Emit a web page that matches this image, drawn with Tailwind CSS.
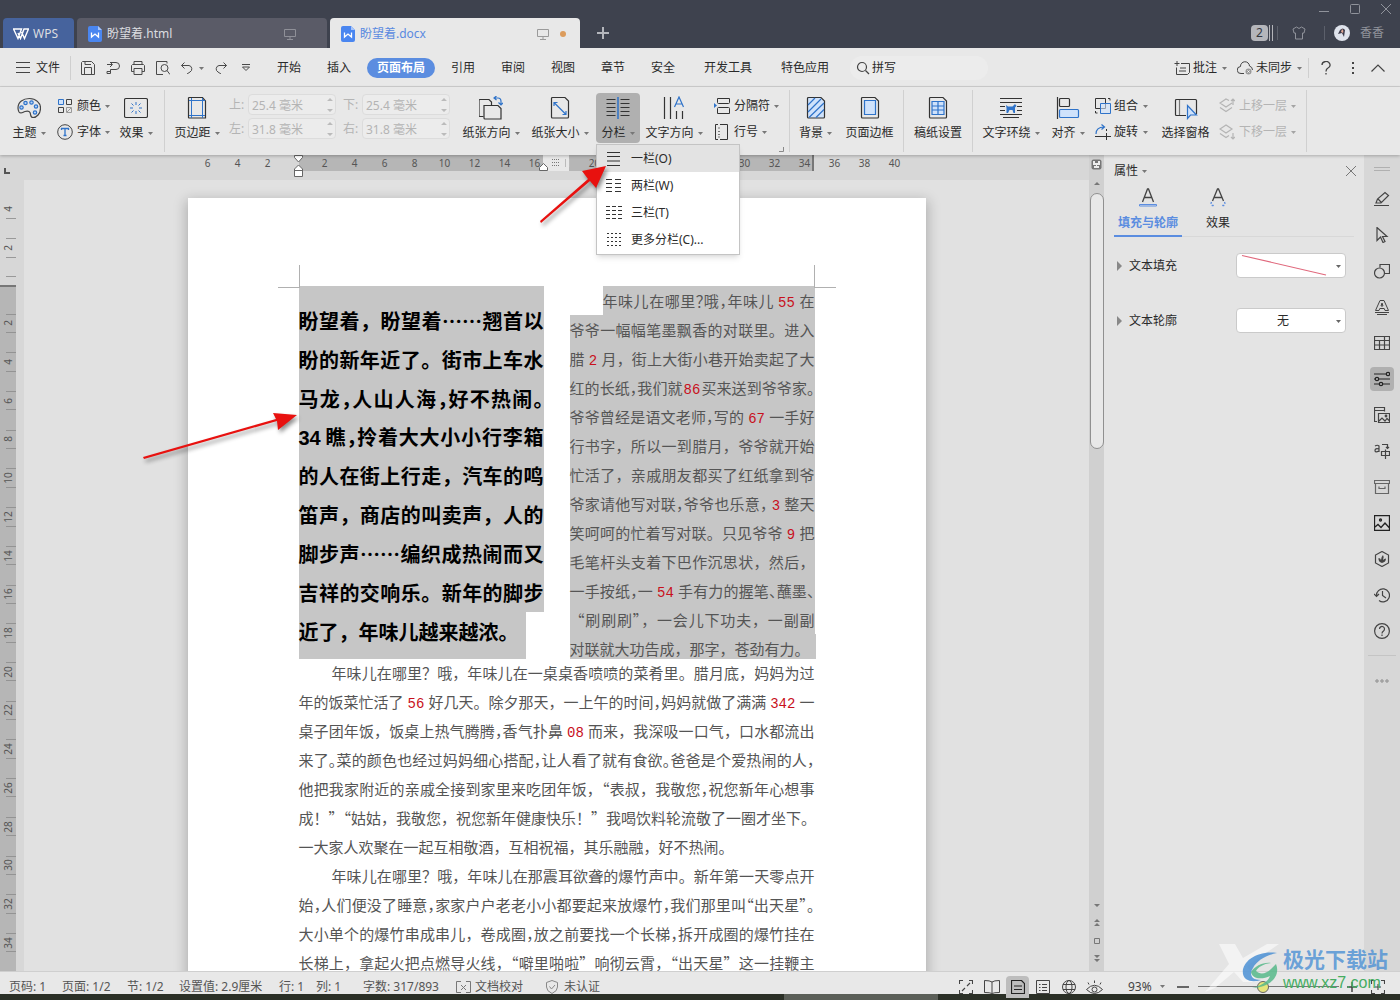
<!DOCTYPE html>
<html lang="zh-CN">
<head>
<meta charset="utf-8">
<title>盼望着.docx - WPS</title>
<script src="https://cdn.jsdelivr.net/npm/@tailwindcss/browser@4"></script>
</head>
<body class="relative flex h-screen flex-col overflow-hidden bg-[#e8e8e8] font-['Noto_Sans','Noto_Sans_CJK_SC',sans-serif] text-xs leading-4 text-[#2a2a2a]">
<svg class="hidden">
  <symbol id="caret" viewBox="0 0 5 3"><path d="M0 0h5L2.500 3z" fill="#777"/></symbol>
  <symbol id="wdoc" viewBox="0 0 14 16"><path d="M2 0h8l4 4v10a2 2 0 0 1-2 2H2a2 2 0 0 1-2-2V2a2 2 0 0 1 2-2z" fill="#4a86f0"/><path d="M10 0l4 4h-4z" fill="#a9c6fa"/><path d="M3.500 6.500v4.500L7 8l3.500 3V6.500" fill="none" stroke="#fff" stroke-width="1.300"/></symbol>
  <symbol id="monitor" viewBox="0 0 12 12"><path d="M.5 1.500h11v7H.5zM6 8.500v3M3 11.500h6" fill="none" stroke="currentColor"/></symbol>
</svg>

<!-- Title bar with document tabs -->
<header class="flex h-12 shrink-0 items-end justify-between bg-[#3e424e]">
  <div class="flex items-end gap-[3px] pl-[3px] text-[#dcdde0]">
    <button class="flex h-[30px] w-[71px] items-center gap-1 rounded-t bg-[#46639d] pt-0.5 pl-2.5">
      <svg class="h-3 w-4" viewBox="0 0 16 12" fill="none" stroke="#fff" stroke-width="1.400"><path d="M.5 1h8L5 10.500zM5 5l2.500 5.500L11 1h4.500L11.500 10.500 8.500 4"/></svg>WPS</button>
    <button class="flex h-[30px] w-[250px] items-center gap-[5px] rounded-t bg-[#5a5b67] pt-0.5 pr-[31px] pl-[11px]">
      <svg class="h-4 w-3.5"><use href="#wdoc"/></svg><span>盼望着.html</span>
      <svg class="ml-auto h-3 w-3 text-[#8f9098]"><use href="#monitor"/></svg></button>
    <button class="flex h-[30px] w-[250px] items-center gap-[5px] rounded-t bg-[#e8e8e8] pt-0.5 pr-2 pl-[11px] text-[#5a8ae0]">
      <svg class="h-4 w-3.5"><use href="#wdoc"/></svg><span>盼望着.docx</span>
      <svg class="ml-auto h-3 w-3 text-[#9a9a9a]"><use href="#monitor"/></svg>
      <i class="mx-1.5 size-1.5 rounded-full bg-[#dc9c5c]"></i></button>
    <button aria-label="新建" class="ml-3.5 flex h-[30px] items-center"><svg class="size-3" viewBox="0 0 12 12" stroke="#b4b6bc" stroke-width="2"><path d="M6 0v12M0 6h12"/></svg></button>
  </div>
  <div class="flex flex-col items-end self-stretch text-[#90939b]">
    <div class="flex gap-[21px] pt-1 pr-[9px]">
      <svg class="size-2.5" viewBox="0 0 10 10" stroke="currentColor"><path d="M0 7.500h10"/></svg>
      <svg class="size-2.5" viewBox="0 0 10 10" stroke="currentColor" fill="none"><rect x=".5" y=".5" width="9" height="9" rx="1"/></svg>
      <svg class="size-2.5" viewBox="0 0 10 10" stroke="currentColor"><path d="M0 0l10 10M10 0L0 10"/></svg>
    </div>
    <div class="mt-[11px] flex items-center pr-4">
      <span class="flex h-4 w-[17px] items-center justify-center rounded-sm bg-[#b4b5ba] text-[#33363f]">2</span>
      <i class="ml-px h-4 w-1 border-x border-[#b4b5ba]"></i>
      <i class="ml-1 h-3.5 w-px bg-[#5c606b]"></i>
      <svg class="ml-3.5 h-3.5 w-3.5" viewBox="0 0 14 14" stroke="currentColor" fill="none"><path d="M4.500 1L1 3l1 4h1.500v6h7V7H12l1-4-3.500-2Q7 4 4.500 1z"/></svg>
      <i class="ml-[18px] h-3.5 w-px bg-[#5c606b]"></i>
      <svg class="ml-[9px] size-4" viewBox="0 0 16 16"><circle cx="8" cy="8" r="8" fill="#dfe3ec"/><path d="M6 5q3-3 5 0l-1 7-2-4-4 1z" fill="#3b3a4a"/><path d="M8 4q2 1 1 4l-2-1z" fill="#e2a795"/></svg>
      <span class="ml-2.5">香香</span>
    </div>
  </div>
</header>

<!-- Menu bar -->
<nav class="flex h-[39px] shrink-0 items-center border-b border-[#d0d0d0] pt-0.5">
  <button class="flex items-center gap-1.5 pl-4"><svg class="h-3 w-3.5" viewBox="0 0 14 12" stroke="#444"><path d="M0 .5h14M0 5.500h14M0 10.500h14"/></svg>文件</button>
  <i class="ml-2.5 h-6 w-px bg-[#cfcfcf]"></i>
  <div class="flex w-[193px] items-center gap-[11px] pl-2.5 text-[#4a4a4a]">
    <svg class="size-3.5 shrink-0" viewBox="0 0 14 14" fill="none" stroke="currentColor"><path d="M1.500.5h9l3 3v10h-13v-12zM3.500 13V6.500h7V13M4 .5v3h6"/></svg>
    <svg class="size-3.5 shrink-0" viewBox="0 0 14 14" fill="none" stroke="currentColor"><path d="M1 3.500h5M4 1l2.500 2.500L4 6M5 1.500h5a3.500 3.500 0 0 1 0 7H4.500v4H1v-2h3.500"/></svg>
    <svg class="size-3.5 shrink-0" viewBox="0 0 14 14" fill="none" stroke="currentColor"><path d="M3 3.500v-3h8v3M3 10.500H.5v-6l1-1h11l1 1v6H11M3 7.500h8v6H3z"/></svg>
    <svg class="size-3.5 shrink-0" viewBox="0 0 14 14" fill="none" stroke="currentColor"><path d="M11 2.500v-2H.5v13H7"/><circle cx="8.500" cy="7" r="3.500"/><path d="M11 9.500l3 4"/></svg>
    <span class="flex items-center gap-1.5"><svg class="size-3" viewBox="0 0 12 12" fill="none" stroke="currentColor"><path d="M3.500.5L.5 3.500l3 3M.5 3.500H8a3.500 3.500 0 0 1 1 6.500L6 12"/></svg><svg class="h-[3px] w-[5px]"><use href="#caret"/></svg></span>
    <svg class="size-3 shrink-0" viewBox="0 0 12 12" fill="none" stroke="currentColor"><path d="M8.500.5l3 3-3 3M11.500 3.500H4A3.500 3.500 0 0 0 3 10l3 2"/></svg>
    <svg class="ml-1 h-2 w-2 shrink-0" viewBox="0 0 8 8" fill="none" stroke="currentColor"><path d="M0 .5h8M.5 3L4 6.500 7.500 3z"/></svg>
  </div>
  <div class="flex text-center">
    <button class="w-[50px]">开始</button><button class="w-[50px]">插入</button>
    <button class="mx-[3px] h-5 w-[68px] rounded-full bg-[#5b8de0] font-bold text-white">页面布局</button>
    <button class="w-[50px]">引用</button><button class="w-[50px]">审阅</button><button class="w-[50px]">视图</button><button class="w-[50px]">章节</button><button class="w-[50px]">安全</button><button class="w-20">开发工具</button><button class="w-[74px]">特色应用</button>
  </div>
  <label class="ml-2 flex h-6 w-[138px] items-center gap-0.5 rounded-full bg-[#ececec] pl-1.5">
    <svg class="size-3.5 shrink-0" viewBox="0 0 14 14" fill="none" stroke="#444" stroke-width="1.200"><circle cx="6" cy="6" r="4.500"/><path d="M9.500 9.500L13 13"/></svg>
    <input aria-label="搜索" value="拼写" class="w-24 bg-transparent outline-none"></label>
  <div class="ml-auto flex items-center pr-[15px]">
    <button class="flex items-center gap-[3px]"><svg class="h-3.5 w-4" viewBox="0 0 16 14" fill="none" stroke="#444"><path d="M7 2.500h8.500v9l-2 2h-11v-7M3 0v5M.5 2.500h5M6 7h6M5 10h7"/></svg>批注<svg class="ml-0.5 h-[3px] w-[5px]"><use href="#caret"/></svg></button>
    <button class="ml-2.5 flex items-center gap-[3px]"><svg class="h-3.5 w-4" viewBox="0 0 16 14" fill="none" stroke="#444"><path d="M7 12.500H4A3.500 3.500 0 0 1 3.500 5.500a4.500 4.500 0 0 1 9-.5q3 1 3 4"/><circle cx="11.500" cy="10.500" r="3" fill="#999" stroke="none"/><path d="M10.500 9.500l2 2m0-2l-2 2" stroke="#fff"/></svg>未同步<svg class="ml-0.5 h-[3px] w-[5px]"><use href="#caret"/></svg></button>
    <i class="ml-1.5 h-5 w-px bg-[#cfcfcf]"></i>
    <svg class="ml-3 h-3.5 w-2.5" viewBox="0 0 10 14" fill="none" stroke="#444" stroke-width="1.300"><path d="M1 4a4 3.500 0 1 1 6 3Q5 8 5 10.500M5 12v1.500"/></svg>
    <svg class="ml-5 h-3.5 w-1" viewBox="0 0 4 14" fill="#444"><rect x="1" y="1" width="2" height="2"/><rect x="1" y="6" width="2" height="2"/><rect x="1" y="11" width="2" height="2"/></svg>
    <svg class="ml-4 h-2 w-3.5" viewBox="0 0 14 8" fill="none" stroke="#444" stroke-width="1.200"><path d="M.5 7.500L7 1l6.500 6.500"/></svg>
  </div>
</nav>

<!-- Ribbon -->
<section class="relative z-20 flex h-[68px] shrink-0 pl-1 shadow-[0_1px_3px_rgba(0,0,0,0.25)]">
  <button class="flex w-[50px] shrink-0 flex-col items-center pt-[9px]">
    <svg class="size-6" viewBox="0 0 24 24" fill="none" stroke="#444" stroke-width="1.200"><path d="M1 12C1 6 6 2.500 12.500 2.500S23.500 7 23.500 12c0 6-4 9.500-7.500 9.500-3 0-2-3-3-5s-3-1.500-5-1-4 3-6 .5Q1 14 1 12z"/><g stroke="#2f73c9" fill="#b7d3f7"><circle cx="4.500" cy="11.500" r="1.700"/><circle cx="8.500" cy="7" r="1.700"/><circle cx="14.500" cy="6.500" r="1.700"/><circle cx="19" cy="10.500" r="1.700"/><circle cx="18" cy="16.500" r="1.700"/></g></svg>
    <span class="mt-[5px] flex items-center gap-1">主题<svg class="h-[3px] w-[5px]"><use href="#caret"/></svg></span></button>
  <div class="flex w-[59px] shrink-0 flex-col gap-2.5 pt-[11px] pl-[3px]">
    <button class="flex items-center gap-1"><svg class="size-4" viewBox="0 0 16 16" fill="none" stroke="#444"><path d="M1.500 1.500h5v5h-5z" stroke="#2f73c9" fill="#cfe2fb"/><path d="M9.500 1.500h5v5h-5zM1.500 9.500h5v5h-5z"/><path d="M9.500 9.500h5v5h-5zM10 14l4-4" stroke="#999"/></svg>颜色<svg class="h-[3px] w-[5px]"><use href="#caret"/></svg></button>
    <button class="flex items-center gap-1"><svg class="size-4" viewBox="0 0 16 16" fill="none" stroke="#444"><circle cx="8" cy="8" r="7.300"/><path d="M4.500 6V4.500h7V6M8 4.500v7M6.500 11.500h3" stroke="#2f73c9" stroke-width="1.300"/></svg>字体<svg class="h-[3px] w-[5px]"><use href="#caret"/></svg></button>
  </div>
  <button class="flex w-[46px] shrink-0 flex-col items-center pt-[9px]">
    <svg class="size-6" viewBox="0 0 24 24" fill="none" stroke="#333"><rect x=".5" y="2.500" width="23" height="19" rx="1.500" stroke-width="1.200"/><path d="M12 6v3M12 15v3M6 12h3M15 12h3M7.500 7.500l2 2M14.500 14.500l2 2M7.500 16.500l2-2M14.500 9.500l2-2" stroke="#2f73c9"/></svg>
    <span class="mt-[5px] flex items-center gap-1">效果<svg class="h-[3px] w-[5px]"><use href="#caret"/></svg></span></button>
  <i class="mt-[3px] ml-[5px] h-[62px] w-px shrink-0 bg-[#d0d0d0]"></i>
  <button class="flex w-16 shrink-0 flex-col items-center pt-[9px]">
    <svg class="size-6" viewBox="0 0 24 24" fill="none" stroke="#333" stroke-width="1.200"><path d="M4 1.500h13.500L20.500 5v17H4a.5.5 0 0 1-.5-.5V2z"/><path d="M6.500 2v20M17.500 2v20M4 4.500h16M4 19.500h16" stroke="#2f73c9" stroke-width="1"/></svg>
    <span class="mt-[5px] flex items-center gap-1">页边距<svg class="h-[3px] w-[5px]"><use href="#caret"/></svg></span></button>
  <div class="grid w-[228px] shrink-0 auto-rows-min grid-cols-[107px_107px] gap-x-[7px] gap-y-[3px] pt-[7px] text-[#b4b4b4]">
    <label class="flex items-center justify-between">上:<span class="relative"><input value="25.4 毫米" disabled class="block h-[21px] w-[88px] rounded-sm border border-[#dcdcdc] bg-[#ececec] pl-[3px]"><svg class="absolute top-1 right-[3px] h-3.5 w-1.5" viewBox="0 0 6 14" fill="#bbb"><path d="M0 3l3-3 3 3zM0 11l3 3 3-3z"/></svg></span></label>
    <label class="flex items-center justify-between">下:<span class="relative"><input value="25.4 毫米" disabled class="block h-[21px] w-[88px] rounded-sm border border-[#dcdcdc] bg-[#ececec] pl-[3px]"><svg class="absolute top-1 right-[3px] h-3.5 w-1.5" viewBox="0 0 6 14" fill="#bbb"><path d="M0 3l3-3 3 3zM0 11l3 3 3-3z"/></svg></span></label>
    <label class="flex items-center justify-between">左:<span class="relative"><input value="31.8 毫米" disabled class="block h-[21px] w-[88px] rounded-sm border border-[#dcdcdc] bg-[#ececec] pl-[3px]"><svg class="absolute top-1 right-[3px] h-3.5 w-1.5" viewBox="0 0 6 14" fill="#bbb"><path d="M0 3l3-3 3 3zM0 11l3 3 3-3z"/></svg></span></label>
    <label class="flex items-center justify-between">右:<span class="relative"><input value="31.8 毫米" disabled class="block h-[21px] w-[88px] rounded-sm border border-[#dcdcdc] bg-[#ececec] pl-[3px]"><svg class="absolute top-1 right-[3px] h-3.5 w-1.5" viewBox="0 0 6 14" fill="#bbb"><path d="M0 3l3-3 3 3zM0 11l3 3 3-3z"/></svg></span></label>
  </div>
  <button class="flex w-[68px] shrink-0 flex-col items-center pt-[9px]">
    <svg class="size-6" viewBox="0 0 24 24" fill="none" stroke="#333" stroke-width="1.200"><path d="M4.500 20.500H1a1 1 0 0 1-1-1V4.500a1 1 0 0 1 1-1h9l2.500 2.500v3"/><path d="M5 9.500h14l3 3v10.500H6a1 1 0 0 1-1-1z"/><path d="M15.500 2H19q3 0 3 3.500v3M17.500 0l-2.500 2 2.500 2M19.500 6.500l2.500 2.500 2.500-2.500" stroke="#2f73c9"/></svg>
    <span class="mt-[5px] flex items-center gap-1">纸张方向<svg class="h-[3px] w-[5px]"><use href="#caret"/></svg></span></button>
  <button class="flex w-[70px] shrink-0 flex-col items-center pt-[9px]">
    <svg class="size-6" viewBox="0 0 24 24" fill="none" stroke="#333" stroke-width="1.200"><path d="M4.500 1.500H17L20.500 5v16a1 1 0 0 1-1 1h-15a1 1 0 0 1-1-1v-18.500a1 1 0 0 1 1-1z"/><path d="M6 6.500l12 12M6 10V6.500h3.500M18 15v3.500h-3.500" stroke="#2f73c9"/></svg>
    <span class="mt-[5px] flex items-center gap-1">纸张大小<svg class="h-[3px] w-[5px]"><use href="#caret"/></svg></span></button>
  <div class="relative mx-px w-11 shrink-0">
    <button aria-expanded="true" class="mt-1.5 flex h-[50px] w-11 flex-col items-center rounded bg-[#b0b0b0] pt-[3px]">
      <svg class="size-6" viewBox="0 0 24 24" fill="none" stroke="#333"><path d="M.5 3.500h9M.5 7.500h9M.5 11.500h9M.5 15.500h9M.5 19.500h9M14.500 3.500h9M14.500 7.500h9M14.500 11.500h9M14.500 15.500h9M14.500 19.500h9" stroke-width="1.200"/><path d="M12 1v22" stroke="#2f73c9" stroke-width="1.500"/></svg>
      <span class="mt-[5px] flex items-center gap-1">分栏<svg class="h-[3px] w-[5px]"><use href="#caret"/></svg></span></button>
    <div role="menu" class="absolute top-[57px] left-0 z-30 w-36 border border-[#c4c4c4] bg-white pb-px shadow-md">
      <button role="menuitem" class="flex h-[27px] w-full items-center gap-[9px] bg-[#e3e3e3] pt-px pl-[9px]"><svg class="h-3.5 w-4" viewBox="0 0 16 14" stroke="#333" stroke-width="1.200"><path d="M1 .5h13M1 4.500h13M1 9h13M1 13.500h13"/></svg>一栏(O)</button>
      <button role="menuitem" class="flex h-[27px] w-full items-center gap-[9px] pt-px pl-[9px]"><svg class="h-3.5 w-4" viewBox="0 0 16 14" stroke="#333" stroke-dasharray="6 3"><path d="M0 .5h15M0 4.500h15M0 8.500h15M0 12.500h15"/></svg>两栏(W)</button>
      <button role="menuitem" class="flex h-[27px] w-full items-center gap-[9px] pt-px pl-[9px]"><svg class="h-3.5 w-4" viewBox="0 0 16 14" stroke="#333" stroke-dasharray="4 2"><path d="M0 .5h16M0 4.500h16M0 8.500h16M0 12.500h16"/></svg>三栏(T)</button>
      <button role="menuitem" class="flex h-[27px] w-full items-center gap-[9px] pt-px pl-[9px]"><svg class="h-3.5 w-4" viewBox="0 0 16 14" stroke="#333" stroke-dasharray="2 2"><path d="M1 .5h15M1 4.500h15M1 8.500h15M1 12.500h15"/></svg>更多分栏(C)...</button>
    </div>
  </div>
  <button class="flex w-[66px] shrink-0 flex-col items-center pt-[9px]">
    <svg class="size-6" viewBox="0 0 24 24" fill="none" stroke="#333" stroke-width="1.200"><path d="M2.500 1v22M8.500 1v22M14.500 15v8M20.500 15v8"/><path d="M12.500 11L17 1l4.500 10M14 8h6" stroke="#2f73c9"/></svg>
    <span class="mt-[5px] flex items-center gap-1">文字方向<svg class="h-[3px] w-[5px]"><use href="#caret"/></svg></span></button>
  <div class="relative flex w-[82px] shrink-0 flex-col gap-2.5 pt-[11px] pl-[7px]">
    <button class="flex items-center gap-1"><svg class="size-4" viewBox="0 0 16 16" fill="none" stroke="#333"><path d="M3.500.5v4a1 1 0 0 0 1 1h10a1 1 0 0 0 1-1v-4zM3.500 15.500v-5a1 1 0 0 1 1-1h10a1 1 0 0 1 1 1v5z"/><path d="M0 5l3 2.500L0 10z" fill="#2f73c9" stroke="none"/></svg>分隔符<svg class="h-[3px] w-[5px]"><use href="#caret"/></svg></button>
    <button class="flex items-center gap-1"><svg class="size-4" viewBox="0 0 16 16" fill="none" stroke="#333"><path d="M6 .5h7.500v15H6M4 .5H1.500v15H4"/><path d="M5 3v2M4 7.500h2M4 10.500h2M5 12v2" stroke="#777"/></svg>行号<svg class="h-[3px] w-[5px]"><use href="#caret"/></svg></button>
    <svg class="absolute right-[5px] bottom-[3px] size-1.5" viewBox="0 0 6 6" fill="none" stroke="#888"><path d="M5.500 1v4.500H1"/></svg>
  </div>
  <i class="mt-[3px] h-[62px] w-px shrink-0 bg-[#d0d0d0]"></i>
  <button class="flex w-[51px] shrink-0 flex-col items-center pt-[9px]">
    <svg class="size-6" viewBox="0 0 24 24" fill="none" stroke="#333" stroke-width="1.200"><path d="M4.500 1.500H17L20.500 5v16a1 1 0 0 1-1 1h-15a1 1 0 0 1-1-1v-18.500a1 1 0 0 1 1-1z" fill="#cfe2fb"/><path d="M4 9l7-7M4 16L17 3M5 21.500L20 7M12 21.500l8-8" stroke="#2f73c9"/></svg>
    <span class="mt-[5px] flex items-center gap-1">背景<svg class="h-[3px] w-[5px]"><use href="#caret"/></svg></span></button>
  <button class="flex w-[57px] shrink-0 flex-col items-center pt-[9px]">
    <svg class="size-6" viewBox="0 0 24 24" fill="none" stroke="#333" stroke-width="1.200"><path d="M4.500 1.500H17L20.500 5v16a1 1 0 0 1-1 1h-15a1 1 0 0 1-1-1v-18.500a1 1 0 0 1 1-1z"/><path d="M6.500 4.500h11v14h-11z" stroke="#2f73c9" fill="#cfe2fb"/></svg>
    <span class="mt-[5px]">页面边框</span></button>
  <i class="mt-[3px] ml-[5px] h-[62px] w-px shrink-0 bg-[#d0d0d0]"></i>
  <button class="flex w-[68px] shrink-0 flex-col items-center pt-[9px]">
    <svg class="size-6" viewBox="0 0 24 24" fill="none" stroke="#333" stroke-width="1.200"><path d="M4.500 1.500H17L20.500 5v16a1 1 0 0 1-1 1h-15a1 1 0 0 1-1-1v-18.500a1 1 0 0 1 1-1z"/><path d="M6 5.500h12v13H6zM6 10h12M6 14h12M12 5.500v13" stroke="#2f73c9" fill="#cfe2fb"/></svg>
    <span class="mt-[5px]">稿纸设置</span></button>
  <i class="mt-[3px] h-[62px] w-px shrink-0 bg-[#d0d0d0]"></i>
  <button class="flex w-[76px] shrink-0 flex-col items-center pt-[9px]">
    <svg class="size-6" viewBox="0 0 24 24" fill="none" stroke="#333" stroke-width="1.200"><path d="M1 2.500h22M1 6.500h22M1 10.500h5M1 14.500h5M18 10.500h5M18 14.500h5M1 18.500h22M4 21.500h16"/><path d="M7 9l2 1.500h4.500L16 8l1.500 2-1.500 1.500V17h-1.500l-1-3h-3L9 17H7.500V12z" fill="#2f73c9" stroke="none"/></svg>
    <span class="mt-[5px] flex items-center gap-1">文字环绕<svg class="h-[3px] w-[5px]"><use href="#caret"/></svg></span></button>
  <button class="flex w-[38px] shrink-0 flex-col items-center pt-[9px]">
    <svg class="size-6" viewBox="0 0 24 24" fill="none" stroke="#333" stroke-width="1.200"><path d="M1.500 1v22"/><rect x="3.500" y="2.500" width="10" height="8" rx="1"/><rect x="3.500" y="13.500" width="19" height="8" rx="1" stroke="#2f73c9" fill="#cfe2fb"/></svg>
    <span class="mt-[5px] flex items-center gap-1">对齐<svg class="h-[3px] w-[5px]"><use href="#caret"/></svg></span></button>
  <div class="flex w-[70px] shrink-0 flex-col gap-2.5 pt-[11px] pl-2">
    <button class="flex items-center gap-[3px]"><svg class="size-4" viewBox="0 0 16 16" fill="none" stroke="#333"><path d="M.5.5h10v10H.5z"/><path d="M5.500 5.500h10v10h-10z" stroke="#2f73c9" fill="#cfe2fb" fill-opacity=".6"/><path d="M.5 13v2h2M13 .5h2v2"/></svg>组合<svg class="ml-0.5 h-[3px] w-[5px]"><use href="#caret"/></svg></button>
    <button class="flex items-center gap-[3px]"><svg class="size-4" viewBox="0 0 16 16" fill="none" stroke="#333"><path d="M1 10Q1 3 9 3M6.500.5L9.500 3l-3 2.500" stroke="#2f73c9" stroke-width="1.200"/><path d="M0 12.500h16M11.500 16V9M11.500 5v2"/></svg>旋转<svg class="ml-0.5 h-[3px] w-[5px]"><use href="#caret"/></svg></button>
  </div>
  <button class="flex w-[57px] shrink-0 flex-col items-center pt-[9px]">
    <svg class="size-6" viewBox="0 0 24 24" fill="none" stroke="#333" stroke-width="1.200"><path d="M12 19.500H2.500a1 1 0 0 1-1-1v-14a1 1 0 0 1 1-1h19a1 1 0 0 1 1 1V18"/><path d="M5.500 4v15" stroke="#777"/><path d="M13.500 9.500v13l3-3.500h6z" stroke="#2f73c9" fill="#cfe2fb"/></svg>
    <span class="mt-[5px]">选择窗格</span></button>
  <div class="flex w-[92px] shrink-0 flex-col gap-2.5 pt-[11px] pl-[5px] text-[#b4b4b4]">
    <button disabled class="flex items-center gap-1"><svg class="size-4" viewBox="0 0 16 16" fill="none" stroke="currentColor" stroke-width="1.200"><path d="M10 2.500L7 1 1 5l6 4 6-4M1 9.500l6 4 6-4M14 7V1M12 3l2-2 2 2"/></svg>上移一层<svg class="h-[3px] w-[5px] opacity-60"><use href="#caret"/></svg></button>
    <button disabled class="flex items-center gap-1"><svg class="size-4" viewBox="0 0 16 16" fill="none" stroke="currentColor" stroke-width="1.200"><path d="M7 1L1 5l6 4 6-4zM1 9.500l6 4 3-2M14 9v6M12 13l2 2 2-2"/></svg>下移一层<svg class="h-[3px] w-[5px] opacity-60"><use href="#caret"/></svg></button>
  </div>
  <i class="mt-[3px] h-[62px] w-px shrink-0 bg-[#d0d0d0]"></i>
</section>

<main class="flex min-h-0 flex-1 overflow-hidden bg-[#e1e1e1]">
  <!-- Vertical ruler -->
  <aside class="w-6 shrink-0 bg-[#d7d7d7] text-[10px] leading-3 text-[#555]">
    <div class="h-[132px] w-4 border-b-2 border-[#777]">
      <div class="h-[34px] pt-[13px] pl-1"><svg class="size-1.5" viewBox="0 0 6 6" fill="none" stroke="#555" stroke-width="2"><path d="M1 0v5h5"/></svg></div>
      <div class="relative flex h-[39px] items-center justify-center"><i class="absolute right-0 h-5 w-2.5 border-b border-[#999]"></i><span class="-rotate-90">4</span></div>
      <div class="relative flex h-[39px] items-center justify-center"><i class="absolute right-0 h-5 w-2.5 border-y border-[#999]"></i><span class="-rotate-90">2</span></div>
      <i class="ml-auto block h-2.5 w-2.5 border-b border-[#999]"></i>
    </div>
    <div class="h-full w-4 bg-[#b6b6b6] pt-[17px]">
      <ol class="grid h-[658px] auto-rows-fr">
        <li class="relative flex items-center justify-center"><i class="absolute right-0 h-1/2 w-2.5 border-y border-[#939393]"></i><span class="-rotate-90">2</span></li>
        <li class="relative flex items-center justify-center"><i class="absolute right-0 h-1/2 w-2.5 border-y border-[#939393]"></i><span class="-rotate-90">4</span></li>
        <li class="relative flex items-center justify-center"><i class="absolute right-0 h-1/2 w-2.5 border-y border-[#939393]"></i><span class="-rotate-90">6</span></li>
        <li class="relative flex items-center justify-center"><i class="absolute right-0 h-1/2 w-2.5 border-y border-[#939393]"></i><span class="-rotate-90">8</span></li>
        <li class="relative flex items-center justify-center"><i class="absolute right-0 h-1/2 w-2.5 border-y border-[#939393]"></i><span class="-rotate-90">10</span></li>
        <li class="relative flex items-center justify-center"><i class="absolute right-0 h-1/2 w-2.5 border-y border-[#939393]"></i><span class="-rotate-90">12</span></li>
        <li class="relative flex items-center justify-center"><i class="absolute right-0 h-1/2 w-2.5 border-y border-[#939393]"></i><span class="-rotate-90">14</span></li>
        <li class="relative flex items-center justify-center"><i class="absolute right-0 h-1/2 w-2.5 border-y border-[#939393]"></i><span class="-rotate-90">16</span></li>
        <li class="relative flex items-center justify-center"><i class="absolute right-0 h-1/2 w-2.5 border-y border-[#939393]"></i><span class="-rotate-90">18</span></li>
        <li class="relative flex items-center justify-center"><i class="absolute right-0 h-1/2 w-2.5 border-y border-[#939393]"></i><span class="-rotate-90">20</span></li>
        <li class="relative flex items-center justify-center"><i class="absolute right-0 h-1/2 w-2.5 border-y border-[#939393]"></i><span class="-rotate-90">22</span></li>
        <li class="relative flex items-center justify-center"><i class="absolute right-0 h-1/2 w-2.5 border-y border-[#939393]"></i><span class="-rotate-90">24</span></li>
        <li class="relative flex items-center justify-center"><i class="absolute right-0 h-1/2 w-2.5 border-y border-[#939393]"></i><span class="-rotate-90">26</span></li>
        <li class="relative flex items-center justify-center"><i class="absolute right-0 h-1/2 w-2.5 border-y border-[#939393]"></i><span class="-rotate-90">28</span></li>
        <li class="relative flex items-center justify-center"><i class="absolute right-0 h-1/2 w-2.5 border-y border-[#939393]"></i><span class="-rotate-90">30</span></li>
        <li class="relative flex items-center justify-center"><i class="absolute right-0 h-1/2 w-2.5 border-y border-[#939393]"></i><span class="-rotate-90">32</span></li>
        <li class="relative flex items-center justify-center"><i class="absolute right-0 h-1/2 w-2.5 border-y border-[#939393]"></i><span class="-rotate-90">34</span></li>
      </ol>
    </div>
  </aside>

  <!-- Document workspace -->
  <div class="flex min-w-0 flex-1 flex-col items-center overflow-hidden">
    <div class="flex h-[25px] w-full shrink-0 justify-center bg-[#d7d7d7]">
      <div class="relative flex w-[738px] shrink-0 text-center text-[10px] leading-4 text-[#555]">
        <div class="absolute left-[111px] flex h-4 w-[515px] border-r-2 border-[#777] bg-[#b6b6b6]"><i class="ml-[244px] h-4 w-[26px] bg-[#e8e8e8]"></i></div>
        <div class="relative flex pl-[5px]"><span class="w-[30px]">6</span><span class="w-[30px]">4</span><span class="w-[30px]">2</span></div>
        <div class="relative ml-[27px] flex"><span class="w-[30px]">2</span><span class="w-[30px]">4</span><span class="w-[30px]">6</span><span class="w-[30px]">8</span><span class="w-[30px]">10</span><span class="w-[30px]">12</span><span class="w-[30px]">14</span><span class="w-[30px]">16</span><span class="w-[30px]"></span><span class="w-[30px]">20</span><span class="w-[120px]"></span><span class="w-[30px]">30</span><span class="w-[30px]">32</span><span class="w-[30px]">34</span><span class="w-[30px]">36</span><span class="w-[30px]">38</span><span class="w-[30px]">40</span></div>
        <svg class="absolute top-0 left-[106px] h-[22px] w-[9px]" viewBox="0 0 9 22" fill="#fff" stroke="#666"><path d="M.5.5h8v2L4.500 7l-4-4.500zM4.500 10l4 4v7.500h-8V14zM.5 15.500h8"/></svg>
        <svg class="absolute top-2 left-[351px] h-2 w-[9px]" viewBox="0 0 9 8" fill="#fff" stroke="#666"><path d="M4.500.5l4 4v3h-8v-3z"/></svg>
        <svg class="absolute top-1 left-[364px] h-2 w-[19px]" viewBox="0 0 19 8" stroke="#777" stroke-dasharray="1 1"><path d="M0 .5h8M0 3.500h8M0 6.500h8"/><path d="M13.500 0v8M17.500 0v8" stroke="#bbb" stroke-dasharray="none"/></svg>
      </div>
    </div>
    <article class="relative mt-[18px] flex h-[1100px] w-[738px] shrink-0 flex-col bg-white pt-[88px] pr-[111px] pl-[111px] font-['Noto_Sans_CJK_SC',sans-serif] text-[15px] leading-[29px] whitespace-nowrap text-[#555] shadow-[0_4px_12px_2px_rgba(0,0,0,0.22)]">
      <i class="absolute top-[67px] left-[90px] h-[23px] w-[22px] border-r border-b border-[#b0b0b0]"></i>
      <i class="absolute top-[67px] right-[90px] h-[23px] w-[22px] border-b border-l border-[#b0b0b0]"></i>
      <div class="flex h-[372px] justify-between">
        <section class="w-[245px] text-xl font-bold text-black">
          <div class="grid h-[326px] auto-rows-fr items-center bg-[#c6c6c6] pt-4 [text-align-last:justify]">
            <p>盼望着，盼望着……翘首以</p>
            <p>盼的新年近了。街市上车水</p>
            <p class="[font-feature-settings:'halt']">马龙，人山人海，好不热闹。</p>
            <p class="[font-feature-settings:'halt']"><span class="mr-1 font-['Liberation_Sans']">34</span>瞧，拎着大大小小行李箱</p>
            <p>的人在街上行走，汽车的鸣</p>
            <p>笛声，商店的叫卖声，人的</p>
            <p>脚步声……编织成热闹而又</p>
            <p>吉祥的交响乐。新年的脚步</p>
          </div>
          <p class="h-[47px] w-[227px] bg-[#c6c6c6] leading-[39px]">近了，年味儿越来越浓。</p>
        </section>
        <section class="w-[245px] [text-align-last:justify]">
          <p class="ml-[33px] bg-[#c6c6c6] [font-feature-settings:'halt']">年味儿在哪里？哦，年味儿<span class="mx-1 font-['Liberation_Mono'] text-sm text-[#c8101c]">55</span>在</p>
          <div class="bg-[#c6c6c6]">
            <p>爷爷一幅幅笔墨飘香的对联里。进入</p>
            <p>腊<span class="mx-1 font-['Liberation_Mono'] text-sm text-[#c8101c]">2</span>月，街上大街小巷开始卖起了大</p>
            <p class="[font-feature-settings:'halt']">红的长纸，我们就<span class="mx-px font-['Liberation_Mono'] text-sm text-[#c8101c]">86</span>买来送到爷爷家。</p>
            <p class="[font-feature-settings:'halt']">爷爷曾经是语文老师，写的<span class="mx-1 font-['Liberation_Mono'] text-sm text-[#c8101c]">67</span>一手好</p>
            <p>行书字，所以一到腊月，爷爷就开始</p>
            <p>忙活了，亲戚朋友都买了红纸拿到爷</p>
            <p class="[font-feature-settings:'halt']">爷家请他写对联，爷爷也乐意，<span class="mx-1 font-['Liberation_Mono'] text-sm text-[#c8101c]">3</span>整天</p>
            <p>笑呵呵的忙着写对联。只见爷爷<span class="mx-1 font-['Liberation_Mono'] text-sm text-[#c8101c]">9</span>把</p>
            <p>毛笔杆头支着下巴作沉思状，然后，</p>
            <p class="[font-feature-settings:'halt']">一手按纸，一<span class="mx-1 font-['Liberation_Mono'] text-sm text-[#c8101c]">54</span>手有力的握笔、蘸墨、</p>
            <p>“刷刷刷”，一会儿下功夫，一副副</p>
          </div>
          <p class="h-[25px] w-[246px] bg-[#c6c6c6] [text-align-last:left]">对联就大功告成，那字，苍劲有力。</p>
        </section>
      </div>
      <section class="[text-align-last:justify]">
        <p class="pl-[33px]">年味儿在哪里？哦，年味儿在一桌桌香喷喷的菜肴里。腊月底，妈妈为过</p>
        <p>年的饭菜忙活了<span class="mx-1 font-['Liberation_Mono'] text-sm text-[#c8101c]">56</span>好几天。除夕那天，一上午的时间<span class="[font-feature-settings:'halt']">，</span>妈妈就做了满满<span class="mx-1 font-['Liberation_Mono'] text-sm text-[#c8101c]">342</span>一</p>
        <p>桌子团年饭，饭桌上热气腾腾<span class="[font-feature-settings:'halt']">，</span>香气扑鼻<span class="mx-1 font-['Liberation_Mono'] text-sm text-[#c8101c]">08</span>而来，我深吸一口气，口水都流出</p>
        <p class="[font-feature-settings:'halt']">来了。菜的颜色也经过妈妈细心搭配，让人看了就有食欲。爸爸是个爱热闹的人，</p>
        <p>他把我家附近的亲戚全接到家里来吃团年饭，<span class="[font-feature-settings:'halt']">“</span>表叔，我敬您<span class="[font-feature-settings:'halt']">，</span>祝您新年心想事</p>
        <p>成！”“姑姑，我敬您，祝您新年健康快乐！”我喝饮料轮流敬了一圈才坐下。</p>
        <p class="[text-align-last:left]">一大家人欢聚在一起互相敬酒，互相祝福，其乐融融，好不热闹。</p>
        <p class="pl-[33px]">年味儿在哪里？哦，年味儿在那震耳欲聋的爆竹声中。新年第一天零点开</p>
        <p class="[font-feature-settings:'halt']">始，人们便没了睡意，家家户户老老小小都要起来放爆竹，我们那里叫“出天星”。</p>
        <p>大小单个的爆竹串成串儿，卷成圈<span class="[font-feature-settings:'halt']">，</span>放之前要找一个长梯<span class="[font-feature-settings:'halt']">，</span>拆开成圈的爆竹挂在</p>
        <p>长梯上，拿起火把点燃导火线，<span class="[font-feature-settings:'halt']">“</span>噼里啪啦”响彻云霄，<span class="[font-feature-settings:'halt']">“</span>出天星”这一挂鞭主</p>
      </section>
    </article>
  </div>

  <!-- Scroll bar -->
  <div class="flex w-[15px] shrink-0 flex-col items-center bg-[#d0d0d0] pt-1">
    <svg class="size-[11px]" viewBox="0 0 11 11"><rect x=".5" y=".5" width="10" height="10" rx="2" fill="#777"/><path d="M2 2h2v2h3V2h2v4H6v1h2v2H3V7h2V6H2z" fill="#eee"/></svg>
    <svg class="mt-3 h-[3px] w-1.5" viewBox="0 0 6 3"><path d="M0 3l3-3 3 3z" fill="#777"/></svg>
    <div class="mt-2 h-[256px] w-3.5 rounded-full border border-[#909090] bg-[#e8e8e8]"></div>
    <svg class="mt-auto mb-[7px] h-[60px] w-1.5" viewBox="0 0 6 60" fill="#777"><path d="M0 0h6L3 3zM0 18l3-3 3 3zM0 22l3-3 3 3zM0 51h6l-3 3zM0 55h6l-3 3z"/><path d="M.5 34.500h5v5h-5z" fill="none" stroke="#777"/></svg>
  </div>

  <!-- Properties panel -->
  <aside class="flex w-[260px] shrink-0 flex-col bg-[#e4e4e4] pt-2 pr-2.5 pl-2.5">
    <div class="flex items-center gap-1"><h2>属性</h2><svg class="h-[3px] w-[5px]"><use href="#caret"/></svg>
      <button aria-label="关闭" class="-mr-0.5 ml-auto"><svg class="size-2.5" viewBox="0 0 10 10" stroke="#777"><path d="M0 0l10 10M10 0L0 10"/></svg></button></div>
    <div class="flex border-b border-[#d8d8d8] text-center">
      <button class="-mb-px flex w-[68px] flex-col items-center border-b-2 border-[#5b8de0] pt-2 font-bold text-[#5b8de0]">
        <svg class="h-5 w-[18px]" viewBox="0 0 18 20" fill="none" stroke="#444" stroke-width="1.300"><path d="M3.500 15L8.500 2h1l5 13M5 10.500h8"/><path d="M.5 17.500h17v1.500H.5z" stroke="#5b8de0" stroke-width="1"/></svg>
        <span class="mt-2 mb-1">填充与轮廓</span></button>
      <button class="flex w-[72px] flex-col items-center pt-2">
        <svg class="h-5 w-[18px]" viewBox="0 0 18 20" fill="none" stroke="#444" stroke-width="1.300"><path d="M3.500 14L8.500 2h1l5 12M5 10.500h8"/><path d="M2.500 15l-1 3q3 1 4 0M15.500 15l1 3q-3 1-4 0" stroke="#5b8de0" stroke-dasharray="2 2"/></svg>
        <span class="mt-2">效果</span></button>
    </div>
    <div class="mt-4 flex h-[25px] items-center pr-2 pl-[3px]">
      <svg class="h-2.5 w-[5px]" viewBox="0 0 5 10"><path d="M0 0l5 5-5 5z" fill="#888"/></svg><label for="fill" class="ml-[7px]">文本填充</label>
      <div class="relative ml-auto"><select id="fill" class="block h-[25px] w-[110px] appearance-none rounded border border-[#cacaca] bg-white"><option></option></select>
        <svg class="pointer-events-none absolute inset-0 h-[25px] w-[110px]" viewBox="0 0 110 25"><path d="M6 2.500L90 22" stroke="#e0687c" stroke-width="1.200"/><path d="M100 12h5l-2.500 3z" fill="#666"/></svg></div>
    </div>
    <div class="mt-[30px] flex h-[25px] items-center pr-2 pl-[3px]">
      <svg class="h-2.5 w-[5px]" viewBox="0 0 5 10"><path d="M0 0l5 5-5 5z" fill="#888"/></svg><label for="outline" class="ml-[7px]">文本轮廓</label>
      <div class="relative ml-auto"><select id="outline" class="block h-[25px] w-[110px] appearance-none rounded border border-[#cacaca] bg-white pl-10"><option>无</option></select>
        <svg class="pointer-events-none absolute inset-0 h-[25px] w-[110px]" viewBox="0 0 110 25"><path d="M100 12h5l-2.500 3z" fill="#666"/></svg></div>
    </div>
  </aside>

  <!-- Side tool strip -->
  <aside class="flex w-9 shrink-0 flex-col items-center bg-[#d7d7d7] pr-px text-[#444]">
    <svg class="mt-3 mb-[9px] h-[5px] w-4 shrink-0" viewBox="0 0 16 5" stroke="#b0b0b0"><path d="M0 .5h16M0 3.500h16"/></svg>
    <button aria-label="编辑" class="flex h-9 w-8 items-center justify-center"><svg class="size-4" viewBox="0 0 16 16" fill="none" stroke="currentColor" stroke-width="1.200"><path d="M2 12l1.500-4L11 1.500l3.500 3L7 12zM4 8l3.500 3.500M0 14.500h15"/></svg></button>
    <button aria-label="选择" class="flex h-9 w-8 items-center justify-center"><svg class="size-4" viewBox="0 0 16 16" fill="none" stroke="currentColor" stroke-width="1.200"><path d="M3 .5v13L6.500 10l2.500 5.500 2-1-2.500-5H13z"/></svg></button>
    <button aria-label="形状" class="flex h-9 w-8 items-center justify-center"><svg class="size-4" viewBox="0 0 16 16" fill="none" stroke="currentColor" stroke-width="1.200"><circle cx="5.500" cy="10" r="5"/><path d="M6 4.500v-3h9.500v9H11"/></svg></button>
    <button aria-label="艺术字" class="flex h-9 w-8 items-center justify-center"><svg class="size-4" viewBox="0 0 16 16" fill="none" stroke="currentColor"><path d="M1.500 11.500L6 1.500h4l4.500 10h-3.500l-.8-2H5.800l-.8 2zM7 7l1-3 1 3zM1 13.500h14M3 15.500h10"/></svg></button>
    <button aria-label="表格" class="flex h-9 w-8 items-center justify-center"><svg class="size-4" viewBox="0 0 16 16" fill="none" stroke="currentColor" stroke-width="1.200"><path d="M.5 1.500h15v13H.5zM.5 5.500h15M.5 10h15M5.500 5.500v9M10.500 1.500v13"/></svg></button>
    <button aria-label="属性" class="my-1.5 flex size-6 items-center justify-center rounded bg-[#b0b0b0]"><svg class="size-4" viewBox="0 0 16 16" fill="none" stroke="#222" stroke-width="1.200"><path d="M0 3h12M5 8h11M0 8h1M0 13h5M9 13h7"/><circle cx="14" cy="3" r="1.700"/><circle cx="3" cy="8" r="1.700"/><circle cx="7" cy="13" r="1.700"/></svg></button>
    <button aria-label="图库" class="flex h-9 w-8 items-center justify-center"><svg class="size-4" viewBox="0 0 16 16" fill="none" stroke="currentColor" stroke-width="1.200"><path d="M3 14.500H.5V.5h10v4M.5 3.500h10M4.500 6.500h11v9h-11zM5 14l3-3 3 3 2-2.500 2 2"/><circle cx="12" cy="9" r=".8"/></svg></button>
    <button aria-label="翻译" class="flex h-9 w-8 items-center justify-center"><svg class="size-4" viewBox="0 0 16 16" fill="none" stroke="currentColor" stroke-width="1.200"><path d="M1 3q2.500-1.500 4 0v6M5 6Q1 5 1 7.500T5 8M8 1.500h5.500V5M12 4l1.500 1.500L15 4M7.500 8.500h8v4h-8zM11.500 6.500V16"/></svg></button>
    <button aria-label="归档" class="flex h-9 w-8 items-center justify-center"><svg class="size-4" viewBox="0 0 16 16" fill="none" stroke="#666" stroke-width="1.200"><path d="M.5 1.500h15v3H.5zM1.500 4.500v10h13v-10M5 7.500v2h6v-2"/></svg></button>
    <button aria-label="图片" class="flex h-9 w-8 items-center justify-center"><svg class="size-4" viewBox="0 0 16 16" fill="none" stroke="#222" stroke-width="1.300"><path d="M.5.5h15v15H.5zM1 12l3-2.500 3 3L11 8l4.500 5"/><circle cx="6.500" cy="5" r="1"/></svg></button>
    <button aria-label="推荐" class="flex h-9 w-8 items-center justify-center"><svg class="size-4" viewBox="0 0 16 16" fill="none" stroke="currentColor" stroke-width="1.200"><path d="M8 .5l6.500 3.500v8L8 15.500 1.500 12V4z"/><path d="M8 12Q4 11 4.500 7q2 0 2.500 2 0-3 2-5 1.500 2 0 5 1-1.500 3-1.500Q12 11 8 12z" fill="currentColor" stroke="none"/></svg></button>
    <button aria-label="历史" class="flex h-9 w-8 items-center justify-center"><svg class="size-4" viewBox="0 0 16 16" fill="none" stroke="currentColor" stroke-width="1.200"><path d="M2.500 9A6.500 6.500 0 1 1 5 13.500M0 7l2.500 2.500L5 7M8.500 4v4.500L12 11"/></svg></button>
    <button aria-label="帮助" class="flex h-9 w-8 items-center justify-center"><svg class="size-4" viewBox="0 0 16 16" fill="none" stroke="currentColor" stroke-width="1.200"><circle cx="8" cy="8" r="7.400"/><path d="M5.500 6a2.500 2.500 0 1 1 4 2Q8 9 8 10.500M8 11.500V13"/></svg></button>
    <i class="mt-1.5 h-px w-7 bg-[#c4c4c4]"></i>
    <svg class="mt-[23px] h-1 w-3.5" viewBox="0 0 14 4" fill="none" stroke="#888"><circle cx="2" cy="2" r="1.200"/><circle cx="7" cy="2" r="1.200"/><circle cx="12" cy="2" r="1.200"/></svg>
  </aside>
</main>

<!-- Status bar -->
<footer class="relative flex h-[23px] shrink-0 items-center justify-between border-t border-[#cfcfcf] bg-[#e8e8e8] pt-[7px] text-[#555]">
  <div class="flex items-center whitespace-nowrap pl-[9px]">
    <span class="w-[53px]">页码: 1</span><span class="w-[65px]">页面: 1/2</span><span class="w-[52px]">节: 1/2</span><span class="w-[100px]">设置值: 2.9厘米</span><span class="w-[37px]">行: 1</span><span class="w-[47px]">列: 1</span><span class="w-[93px]">字数: 317/893</span>
    <span class="flex w-[90px] items-center gap-1"><svg class="h-3 w-[15px]" viewBox="0 0 15 12" fill="none" stroke="#777"><path d="M5 11.500H.5V.5H5M10 .5h4.500v11H10M5 4l5 5M10 4L5 9"/></svg>文档校对</span>
    <span class="flex items-center gap-1.5"><svg class="h-3.5 w-3" viewBox="0 0 12 14" fill="none" stroke="#888"><path d="M6 .5l5.500 2V7q0 4-5.500 6.500Q.5 11 .5 7V2.500zM3.500 6.500L5.500 9l3.500-4"/></svg>未认证</span>
  </div>
  <div class="flex items-center pr-[15px] text-[#444]">
    <svg class="size-3.5" viewBox="0 0 14 14" fill="none" stroke="currentColor" stroke-width="1.100"><path d="M.5 4V.5H4M10 .5h3.500V4M13.500 10v3.500H10M4 13.500H.5V10M8 6l3-3M6 8l-3 3"/></svg>
    <svg class="ml-[11px] h-3.5 w-4" viewBox="0 0 16 14" fill="none" stroke="currentColor"><path d="M8 2Q6 .5.5.5v12Q6 12.500 8 13.500 10 12.500 15.500 12.500V.5Q10 .5 8 2zM8 2v11"/></svg>
    <span class="ml-1.5 flex h-[22px] w-[23px] items-center justify-center rounded-t bg-[#bdbdbd]"><svg class="size-3.5" viewBox="0 0 14 14" fill="none" stroke="#222" stroke-width="1.200"><path d="M.5.5h10l3 3v10H.5zM3 6h8M3 9.500h8"/></svg></span>
    <svg class="ml-[7px] size-3.5" viewBox="0 0 14 14" fill="none" stroke="currentColor"><path d="M.5.5h13v13H.5zM3 4.500h1.500M6 4.500h5M3 7.500h1.500M6 7.500h5M3 10.500h1.500M6 10.500h5"/></svg>
    <svg class="ml-3 size-3.5" viewBox="0 0 14 14" fill="none" stroke="currentColor"><circle cx="7" cy="7" r="6.500"/><ellipse cx="7" cy="7" rx="3" ry="6.500"/><path d="M1 4.500h12M1 9.500h12"/></svg>
    <svg class="ml-2.5 h-3.5 w-[17px]" viewBox="0 0 17 14" fill="none" stroke="currentColor"><path d="M.5 9.500Q8.500 1 16.500 9.500 8.500 17.500.5 9.500zM3 4.500l-1-2M8.500 3V.5M14 4.500l1-2"/><circle cx="8.500" cy="9.500" r="2.500"/></svg>
    <span class="ml-[25px] w-8">93%</span><svg class="h-[3px] w-[5px]"><use href="#caret"/></svg>
    <i class="ml-3 h-0.5 w-3 bg-[#666]"></i>
    <input type="range" aria-label="缩放" min="0" max="100" value="46" class="mr-2 ml-[9px] h-3 w-[141px] appearance-none bg-[linear-gradient(#777,#777)] bg-[length:100%_1px] bg-center bg-no-repeat [&::-webkit-slider-thumb]:size-3 [&::-webkit-slider-thumb]:appearance-none [&::-webkit-slider-thumb]:rounded-full [&::-webkit-slider-thumb]:border [&::-webkit-slider-thumb]:border-[#666] [&::-webkit-slider-thumb]:bg-[#e6e47a]">
    <svg class="size-2.5" viewBox="0 0 10 10" stroke="#444" stroke-width="1.500"><path d="M5 0v10M0 5h10"/></svg>
    <svg class="ml-3.5 size-3.5" viewBox="0 0 14 14" fill="none" stroke="currentColor" stroke-width="1.100"><path d="M.5 4V.5H4M10 .5h3.500V4M13.500 10v3.500H10M4 13.500H.5V10M7 4v6M4 7h6"/></svg>
  </div>
</footer>
<div class="h-1.5 shrink-0 bg-[linear-gradient(90deg,#2b3027_56%,#5b5f58_56%,#5b5f58_67%,#2b3027_67%)]"></div>

<!-- Site mark in the corner -->
<div class="pointer-events-none absolute right-2.5 bottom-2 z-40 flex h-[50px] w-[185px] items-end">
  <svg class="h-[50px] w-[78px] shrink-0" viewBox="0 0 78 50"><path d="M14 2h16l8 14L62 2h12L42 24l10 16H38L29 30 10 46 0 50 24 22z" fill="#fff" fill-opacity=".55"/><path d="M72 11C52 8 36 20 38 32c1 6 8 9 18 6-10 0-12-6-8-12C52 18 62 13 72 11z" fill="#4a8fd4" fill-opacity=".85"/><path d="M46 30c4-6 12-10 20-9-8 1-13 4-15 8 4 4 10 3 15-2l5-5c5 12-6 24-24 24 8-2 16-6 18-12-8 4-18 3-19-4z" fill="#56b98a" fill-opacity=".85"/></svg>
  <div class="-mb-px font-bold whitespace-nowrap"><div class="text-[21px] leading-7 text-[#4a8fd4]/80">极光下载站</div><div class="font-['Liberation_Sans'] text-base leading-5 font-normal text-[#45ad62]">www.xz7.com</div></div>
</div>

<!-- Pointer arrows -->
<svg class="pointer-events-none absolute top-0 left-0 z-40 h-[500px] w-[700px] drop-shadow-[2px_3px_2px_rgba(0,0,0,0.45)]" viewBox="0 0 700 500" fill="#e8110f">
  <path d="M540 221l48-42-6-8 24-5-10 22-6-7-49 42z"/>
  <path d="M143 457l133-38-3-6 24 2-19 15-1-9-133 38z"/>
</svg>
</body>
</html>
